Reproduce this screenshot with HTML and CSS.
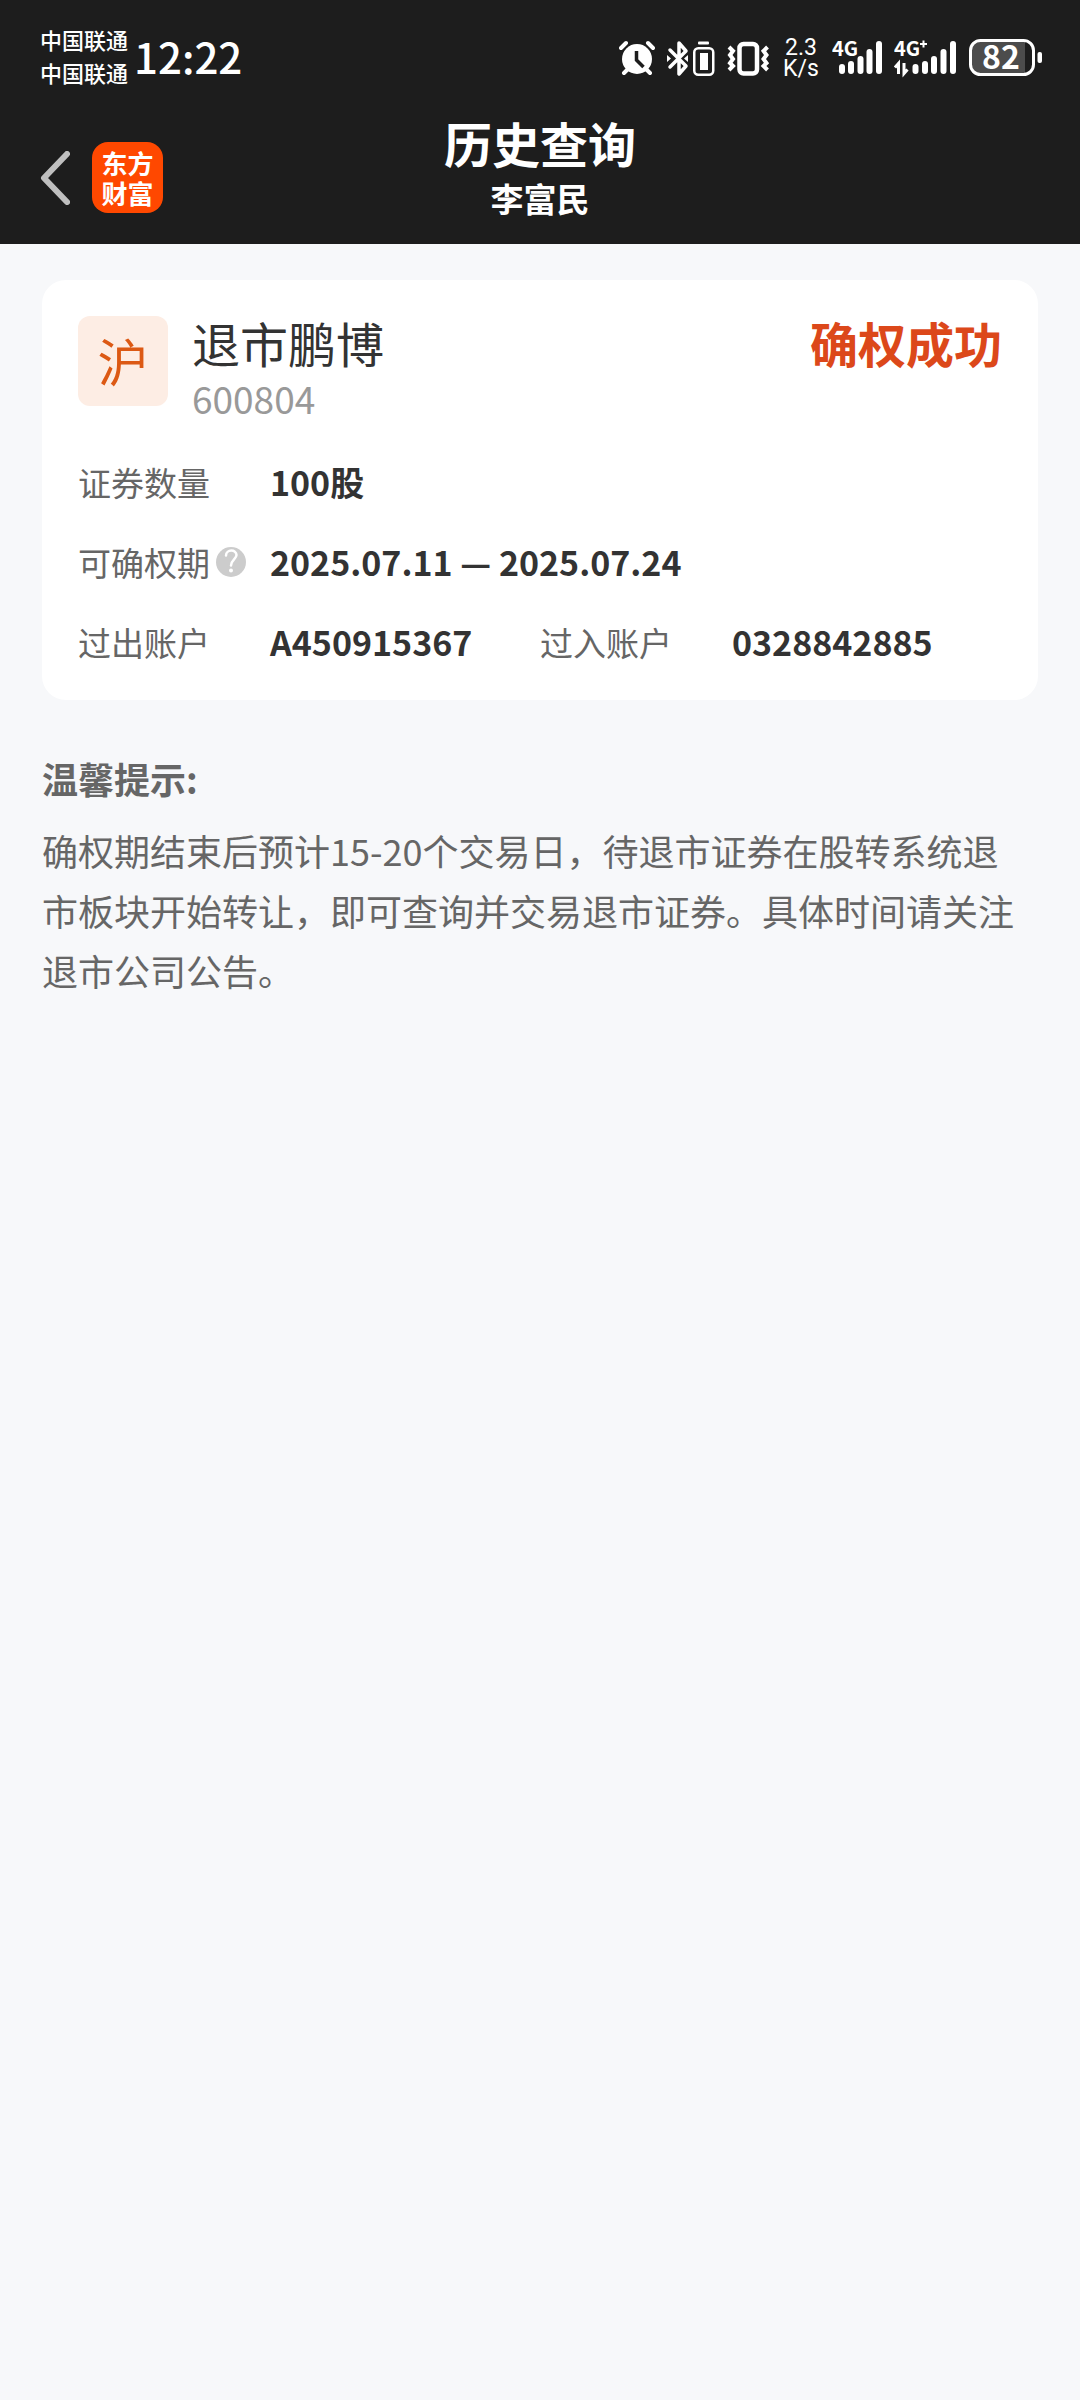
FILE: index.html
```html
<!DOCTYPE html>
<html lang="zh-CN">
<head>
<meta charset="utf-8">
<meta name="viewport" content="width=device-width, initial-scale=1">
<title>历史查询</title>
<link rel="stylesheet" href="styles.css">
</head>
<body>
<header class="top">
  <div class="status">
    <div class="carriers"><span>中国联通</span><span>中国联通</span></div>
    <time class="clock">12:22</time>
    <div class="indicators">
      <svg width="36" height="44" viewBox="0 0 36 44" aria-hidden="true">
        <circle cx="18" cy="23" r="15" fill="#fff"/>
        <path d="M2 12l5-5M29 7l5 5M5 37l5-5M31 37l-5-5" stroke="#fff" stroke-width="4" stroke-linecap="round"/>
        <path d="M17.500 15v9l7 7" fill="none" stroke="#1d1d1d" stroke-width="3.500"/>
      </svg>
      <svg width="48" height="44" viewBox="0 0 48 44" aria-hidden="true">
        <path d="M3 14l16 16-7 8V7l7 8L3 31" fill="none" stroke="#fff" stroke-width="3.500" stroke-linejoin="round" stroke-linecap="round"/>
        <path d="M0 19l4 3.500L0 26zM21 19l-4 3.500 4 3.500z" fill="#fff"/>
        <rect x="27.250" y="12.250" width="19" height="26.500" rx="4" fill="none" stroke="#fff" stroke-width="2.500"/>
        <rect x="33" y="17" width="8" height="17" fill="#fff"/>
        <rect x="31" y="5.500" width="11" height="3" rx="1" fill="#fff"/>
      </svg>
      <svg width="43" height="44" viewBox="0 0 43 44" aria-hidden="true">
        <rect x="12.500" y="8" width="17.500" height="29.500" rx="4" fill="none" stroke="#fff" stroke-width="4.500"/>
        <path d="M2 11l4 4-3 4 3 4-3 4 3 3-4 4M40.500 11l-4 4 3 4-3 4 3 4-3 3 4 4" fill="none" stroke="#fff" stroke-width="4"/>
      </svg>
      <div class="speed"><span>2.3</span><span>K/s</span></div>
      <svg width="50" height="44" viewBox="0 0 50 44" role="img" aria-label="4G">
        <text x="0" y="20" class="net">4G</text>
        <g fill="#fff">
          <rect x="7" y="28" width="6" height="10" rx="3"/><rect x="16" y="25" width="6" height="13" rx="3"/>
          <rect x="25.500" y="20" width="6" height="18" rx="3"/><rect x="34.500" y="13" width="6" height="25" rx="3"/>
          <rect x="44" y="5" width="6" height="33" rx="3"/>
        </g>
      </svg>
      <svg width="62" height="44" viewBox="0 0 62 44" role="img" aria-label="4G+">
        <text x="0" y="20" class="net">4G</text>
        <path d="M29.500 4.500v7M26 8h7" stroke="#fff" stroke-width="2"/>
        <path d="M1 31.500l3.500-4V38M10 27v10.500l3.500-4" fill="none" stroke="#fff" stroke-width="3"/>
        <g fill="#fff">
          <rect x="18.500" y="28" width="6" height="10" rx="3"/><rect x="28" y="25" width="6" height="13" rx="3"/>
          <rect x="37" y="20" width="6" height="18" rx="3"/><rect x="46.500" y="13" width="6" height="25" rx="3"/>
          <rect x="56" y="5" width="6" height="33" rx="3"/>
        </g>
      </svg>
      <svg width="74" height="44" viewBox="0 0 74 44" role="img" aria-label="82%">
        <path d="M57 5v33H12a8 8 0 0 1-8-8V13a8 8 0 0 1 8-8z" fill="#4c4c4c"/>
        <rect x="2.500" y="4.500" width="63" height="34" rx="10" fill="none" stroke="#fff" stroke-width="3"/>
        <rect x="69.500" y="16" width="4.500" height="11" rx="2" fill="#fff"/>
        <text x="33" y="33" text-anchor="middle" class="charge">82</text>
      </svg>
    </div>
  </div>
  <nav class="nav">
    <div class="nav-left">
      <button class="back" type="button" aria-label="返回">
        <svg width="30" height="54" viewBox="0 0 30 54"><path d="M27 3L4 27l23 24" fill="none" stroke="#bfbfbf" stroke-width="6" stroke-linecap="round" stroke-linejoin="round"/></svg>
      </button>
      <a class="logo" href="#"><span>东方</span><span>财富</span></a>
    </div>
    <div class="heading">
      <h1 class="title">历史查询</h1>
      <p class="user">李富民</p>
    </div>
  </nav>
</header>
<main class="content">
  <section class="card">
    <div class="stock">
      <span class="market">沪</span>
      <div class="stock-info">
        <h2 class="stock-name">退市鹏博</h2>
        <span class="code">600804</span>
      </div>
      <strong class="result">确权成功</strong>
    </div>
    <dl class="details">
      <div class="row wide"><dt>证券数量</dt><dd>100股</dd></div>
      <div class="row wide">
        <dt>可确权期
          <button class="help" type="button" aria-label="说明">
            <svg width="30" height="30" viewBox="0 0 30 30"><circle cx="15" cy="15" r="15" fill="#ccc"/><path d="M10 8.500C10 2 20.500 2 20.500 8c0 4-5.500 5-5.500 10.500" fill="none" stroke="#fff" stroke-width="2.500" stroke-linecap="round"/><circle cx="15" cy="23.500" r="2" fill="#fff"/></svg>
          </button>
        </dt>
        <dd>2025.07.11 — 2025.07.24</dd>
      </div>
      <div class="row"><dt>过出账户</dt><dd>A450915367</dd></div>
      <div class="row"><dt>过入账户</dt><dd>0328842885</dd></div>
    </dl>
  </section>
  <section class="tips">
    <h2 class="tips-title">温馨提示:</h2>
    <p class="tips-text">确权期结束后预计15-20个交易日，待退市证券在股转系统退市板块开始转让，即可查询并交易退市证券。具体时间请关注退市公司公告。</p>
  </section>
</main>
</body>
</html>
```
FILE: styles.css
```css
* { box-sizing: border-box; margin: 0; padding: 0; }
body {
  min-height: 100vh;
  background: #f7f8fa;
  color: #333;
  font-family: "Noto Sans CJK SC", sans-serif;
}
button { border: 0; background: none; color: inherit; cursor: pointer; }
svg { display: block; flex: none; }

.top { background: #1d1d1d; color: #fff; }
.status {
  display: flex;
  align-items: center;
  height: 112px;
  padding: 0 38px 0 40px;
}
.carriers {
  display: flex;
  flex-direction: column;
  font-size: 22px;
  line-height: 33px;
  font-weight: 500;
}
.clock { margin-left: 6px; font-size: 42px; line-height: 60px; font-weight: 500; }
.indicators { display: flex; align-items: center; gap: 12px; margin: 4px 0 0 auto; }
.speed {
  display: flex;
  flex-direction: column;
  align-items: center;
  width: 38px;
  font: 400 23px/21px Roboto, sans-serif;
}
.net { font: 700 20px "Noto Sans CJK SC", sans-serif; fill: #fff; }
.charge { font: 700 32px "Noto Sans CJK SC", sans-serif; fill: #fff; }

.nav {
  display: grid;
  grid-template-columns: 1fr auto 1fr;
  align-items: start;
  padding: 0 40px 22px;
}
.nav-left { display: flex; align-items: center; gap: 22px; padding-top: 30px; }
.logo {
  display: flex;
  flex-direction: column;
  align-items: center;
  justify-content: center;
  width: 71px;
  height: 71px;
  border-radius: 16px;
  background: #ff4800;
  color: #fff;
  font-size: 26px;
  line-height: 30px;
  font-weight: 700;
  text-decoration: none;
}
.heading { text-align: center; }
.title { font-size: 48px; line-height: 60px; font-weight: 700; }
.user { margin-top: 2px; font-size: 33px; line-height: 48px; font-weight: 700; }

.content { padding: 36px 42px; }
.card { padding: 36px 36px 18px; border-radius: 24px; background: #fff; }
.stock { display: flex; align-items: flex-start; }
.market {
  width: 90px;
  border-radius: 12px;
  background: #fdede4;
  color: #dc5914;
  font-size: 51px;
  line-height: 88px;
  height: 90px;
  text-align: center;
}
.stock-info { display: flex; flex-direction: column; gap: 4px; margin-left: 24px; }
.stock-name { font-size: 48px; line-height: 52px; font-weight: 400; }
.code { color: #999; font-size: 37px; line-height: 52px; }
.result { margin-left: auto; color: #dc481a; font-size: 48px; line-height: 52px; font-weight: 700; }

.details { display: grid; grid-template-columns: 1fr 1fr; margin-top: 18px; }
.row { display: flex; font-size: 33px; line-height: 80px; }
.wide { grid-column: 1 / -1; }
.row dt { display: flex; align-items: center; gap: 6px; flex: 0 0 192px; color: #666; }
.row dd { font-size: 34px; font-weight: 700; }

.tips { margin-top: 48px; padding-right: 12px; color: #666; font-size: 36px; line-height: 60px; }
.tips-title { font-size: 36px; font-weight: 700; }
.tips-text { margin-top: 12px; }
```
